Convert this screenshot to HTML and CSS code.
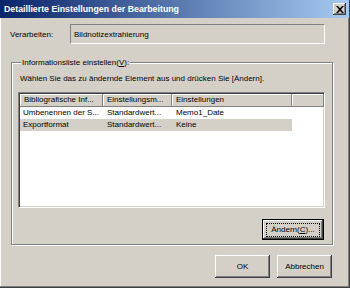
FILE: index.html
```html
<!DOCTYPE html>
<html>
<head>
<meta charset="utf-8">
<link rel="stylesheet" href="styles.css">
</head>
<body>
<div class="window">
  <div class="titlebar">
    <span class="title">Detaillierte Einstellungen der Bearbeitung</span>
    <span class="close"><svg width="8" height="7" viewBox="0 0 8 7"><path d="M0 0h2l2 2.2L6 0h2L5 3.5 8 7H6L4 4.8 2 7H0l3-3.5z" fill="#000"/></svg></span>
  </div>
  <div class="content">
    <div class="field-row">
      <span class="label">Verarbeiten:</span>
      <div class="field">Bildnotizextrahierung</div>
    </div>
    <fieldset class="group">
      <legend>Informationsliste einstellen(<u>V</u>):</legend>
      <p class="hint">Wählen Sie das zu ändernde Element aus und drücken Sie [Ändern].</p>
      <div class="list">
        <div class="lv-header">
          <div class="hcell c1">Bibliografische Inf...</div>
          <div class="hcell c2">Einstellungsm...</div>
          <div class="hcell c3">Einstellungen</div>
          <div class="hcell c4"></div>
        </div>
        <div class="lv-row">
          <div class="cell c1">Umbenennen der S...</div>
          <div class="cell c2">Standardwert...</div>
          <div class="cell c3">Memo1_Date</div>
        </div>
        <div class="lv-row selected">
          <div class="cell c1">Exportformat</div>
          <div class="cell c2">Standardwert...</div>
          <div class="cell c3">Keine</div>
        </div>
      </div>
      <div class="group-actions">
        <button class="btn btn-default"><span class="focus">Ändern(<u>C</u>)...</span></button>
      </div>
    </fieldset>
    <div class="actions">
      <button class="btn btn-dlg">OK</button>
      <button class="btn btn-dlg">Abbrechen</button>
    </div>
  </div>
</div>
</body>
</html>
```

FILE: styles.css
```css
* { box-sizing: border-box; }
html, body { margin: 0; padding: 0; }
body {
  width: 350px;
  height: 288px;
  overflow: hidden;
  font-family: "Liberation Sans", Arial, sans-serif;
  font-size: 8px;
  color: #000;
  background: #d4d0c8;
}
.window {
  width: 350px;
  height: 288px;
  background: #d4d0c8;
  border-right: 1px solid #404040;
  border-bottom: 1px solid #404040;
  box-shadow: inset -1px -1px 0 #808080, inset 1px 1px 0 #fff;
  display: flex;
  flex-direction: column;
}
.titlebar {
  height: 18px;
  background: linear-gradient(to right, #0a246a, #a6caf0);
  display: flex;
  align-items: center;
  justify-content: space-between;
  padding: 0 3px 0 4px;
}
.title {
  color: #fff;
  font-weight: bold;
  font-size: 8.8px;
}
.close {
  width: 13px;
  height: 12px;
  background: #d4d0c8;
  box-shadow: inset -1px -1px 0 #404040, inset 1px 1px 0 #fff, inset -2px -2px 0 #808080;
  display: flex;
  align-items: center;
  justify-content: center;
}
.content {
  padding: 6px 16px 0 10px;
  display: flex;
  flex-direction: column;
  flex: 1;
}
.field-row {
  display: flex;
  align-items: center;
  height: 20px;
}
.label { width: 60px; }
.field {
  width: 255px;
  height: 20px;
  border-top: 1px solid #808080;
  border-left: 1px solid #808080;
  border-right: 1px solid #fff;
  border-bottom: 1px solid #fff;
  padding: 0 3px;
  display: flex;
  align-items: center;
}
.group {
  margin: 12px 0 0 1px;
  padding: 0 0 0 6px;
  height: 189px;
  border: 1px solid #808080;
  box-shadow: inset 1px 1px 0 #fff, 1px 1px 0 #fff;
  min-width: 0;
}
.group legend {
  padding: 0 1px;
  margin-left: 3px;
  background: #d4d0c8;
  line-height: 13px;
}
.hint {
  margin: 3px 0 7px 2px;
  line-height: 13px;
}
.list {
  width: 307px;
  height: 116px;
  background: #fff;
  border-top: 1px solid #808080;
  border-left: 1px solid #808080;
  border-right: 1px solid #fff;
  border-bottom: 1px solid #fff;
  box-shadow: inset 1px 1px 0 #404040, inset -1px -1px 0 #d4d0c8;
  padding: 1px 0 0 1px;
}
.lv-header {
  display: flex;
  height: 13px;
}
.hcell {
  height: 13px;
  background: #d4d0c8;
  box-shadow: inset -1px -1px 0 #808080, inset 1px 1px 0 #fff;
  padding: 0 4px;
  line-height: 12px;
  white-space: nowrap;
  overflow: hidden;
}
.c1 { width: 83px; }
.c2 { width: 69px; }
.c3 { width: 120px; }
.c4 { width: 32px; }
.lv-row {
  display: flex;
  height: 12px;
  line-height: 12px;
}
.cell {
  padding: 0 4px 0 3px;
  white-space: nowrap;
}
.cell.c2, .cell.c3 { padding-left: 4px; }
.lv-row.selected {
  width: 272px;
  background: #d4d0c8;
}
.group-actions {
  display: flex;
  justify-content: flex-end;
  padding: 11px 8px 0 0;
}
.btn {
  font-family: inherit;
  font-size: 8px;
  color: #000;
  background: #d4d0c8;
  border: none;
  padding: 0;
  margin: 0;
  box-shadow: inset -1px -1px 0 #404040, inset 1px 1px 0 #fff, inset -2px -2px 0 #808080;
  display: flex;
  align-items: center;
  justify-content: center;
}
.btn-default {
  width: 62px;
  height: 21px;
  border: 1px solid #000;
}
.focus {
  border: 1px dotted #000;
  width: 54px;
  height: 14px;
  display: flex;
  align-items: center;
  justify-content: center;
  white-space: nowrap;
}
.actions {
  display: flex;
  justify-content: flex-end;
  gap: 7px;
  margin-top: 10px;
  margin-right: 1px;
}
.btn-dlg {
  width: 55px;
  height: 23px;
}
```
